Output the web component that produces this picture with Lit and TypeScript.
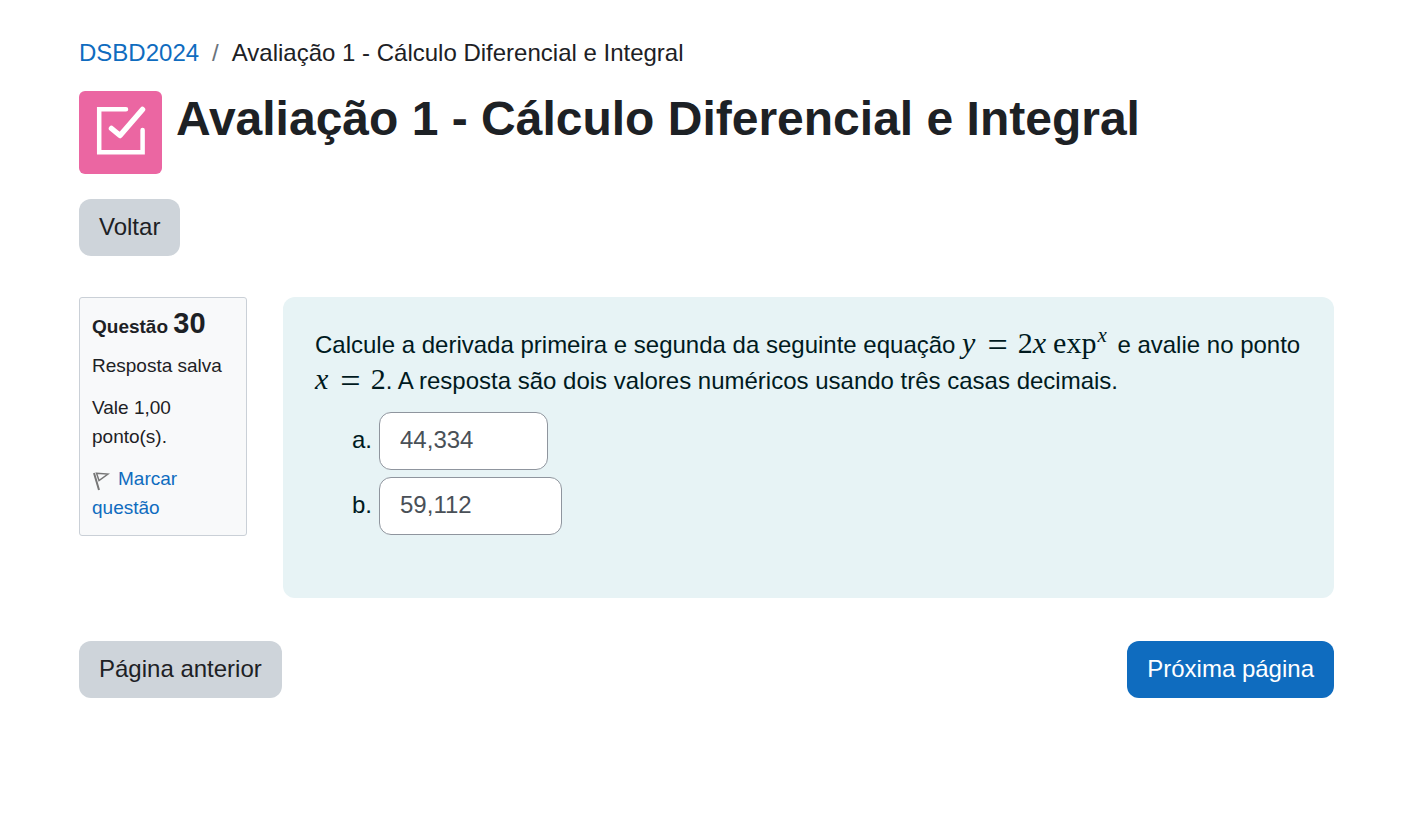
import { LitElement, html, css } from "lit";
import { customElement } from "lit/decorators.js";

@customElement("app-root")
export class AppRoot extends LitElement {
  static styles = css`
    :host {
      display: block;
      font: 24px/36px "Liberation Sans", Arial, sans-serif;
      color: #1d2125;
      background: #fff;
    }
    * { box-sizing: border-box; }
    main { padding: 35px 86px 36px 79px; }
    a { color: #0f6cbf; text-decoration: none; }
    .crumbs { display: flex; flex-wrap: wrap; gap: 13px; }
    .slash { color: #6a737b; }
    .heading { display: flex; align-items: flex-start; gap: 14px; margin-top: 20px; }
    .icon { flex: none; width: 83px; height: 83px; border-radius: 6px; background: #eb66a2; }
    .icon svg { display: block; width: 100%; height: 100%; }
    h1 { margin: 0; font-size: 48px; line-height: 56px; font-weight: 700; }
    button {
      font: inherit;
      padding: 10px 20px 11px;
      border: 0;
      border-radius: 12px;
      background: #ced4da;
      color: #1d2125;
      cursor: pointer;
    }
    .back { margin-top: 25px; display: flex; }
    .question { display: flex; align-items: flex-start; gap: 36px; margin-top: 41px; }
    .info {
      flex: none;
      width: 168px;
      padding: 9px 12px 13px;
      border: 1px solid #cad0d7;
      border-radius: 3px;
      background: #f8f9fa;
      font-size: 19px;
      line-height: 29px;
    }
    .info h2 { margin: 0; font-size: 19px; line-height: 32px; font-weight: 700; }
    .number { font-size: 29px; }
    .info p { margin: 0 0 13px; }
    .info h2 + p { margin-top: 8px; }
    .info p:last-child { margin-bottom: 0; }
    .flag { width: 18px; height: 20px; margin-right: 8px; vertical-align: -6px; }
    .content {
      flex: 1;
      min-width: 0;
      padding: 30px 32px 63px;
      border-radius: 12px;
      background: #e7f3f5;
      color: #001a1e;
    }
    .content p { margin: 0; }
    .math { font-family: "Liberation Serif", "Times New Roman", serif; font-size: 30px; line-height: 1px; white-space: nowrap; }
    .math i { padding-right: 4px; }
    .math .eq { font-size: 36px; line-height: 1px; padding: 0 10px 0 8px; vertical-align: -4px; }
    .math sup { font-size: 21px; line-height: 1px; vertical-align: 11px; }
    .math .fn { padding: 0 1px 0 3px; }
    ol { margin: 13px 0 0; padding: 0 0 0 37px; list-style: none; display: grid; gap: 7px; }
    li { display: flex; align-items: center; gap: 7px; }
    input {
      font: inherit;
      height: 58px;
      padding: 0 20px 2px;
      border: 1px solid #8f959e;
      border-radius: 12px;
      background: #fff;
      color: #495057;
    }
    li label { padding-bottom: 2px; }
    .short { width: 169px; }
    .long { width: 183px; }
    nav.pages { display: flex; justify-content: space-between; margin-top: 43px; }
    button.primary { background: #0f6cbf; color: #fff; }
  `;

  render() {
    return html`
      <main>
        <nav class="crumbs" aria-label="Navegação">
          <a href="#">DSBD2024</a><span class="slash">/</span>
          <span>Avaliação 1 - Cálculo Diferencial e Integral</span>
        </nav>
        <header class="heading">
          <div class="icon">
            <svg viewBox="0 0 83 83" fill="none" stroke="#fff" stroke-linecap="round" stroke-linejoin="round" aria-hidden="true">
              <path stroke-width="4.500" stroke-linejoin="miter" d="M47 18.200H20.200V61.300H63.600V39" />
              <path stroke-width="5.500" d="M32.500 37.500L41 44.500L63.500 18.500" />
            </svg>
          </div>
          <h1>Avaliação 1 - Cálculo Diferencial e Integral</h1>
        </header>
        <div class="back"><button type="button">Voltar</button></div>
        <section class="question">
          <aside class="info">
            <h2>Questão <span class="number">30</span></h2>
            <p>Resposta salva</p>
            <p>Vale 1,00 ponto(s).</p>
            <p>
              <a href="#"><svg class="flag" viewBox="0 0 18 20" fill="none" stroke="#777" aria-hidden="true">
                <path stroke-width="2" d="M2 2L7 19" />
                <path stroke-width="1.500" d="M4.500 2.200L16 3L7 9.500Z" />
              </svg>Marcar questão</a>
            </p>
          </aside>
          <div class="content">
            <p>
              Calcule a derivada primeira e segunda da seguinte equação
              <span class="math"><i>y</i><span class="eq">=</span>2<i>x</i><span class="fn">exp</span><sup><i>x</i></sup></span>
              e avalie no ponto
              <span class="math"><i>x</i><span class="eq">=</span>2</span>. A resposta são dois valores numéricos usando três casas decimais.
            </p>
            <ol>
              <li><label for="a">a.</label><input id="a" class="short" type="text" value="44,334" /></li>
              <li><label for="b">b.</label><input id="b" class="long" type="text" value="59,112" /></li>
            </ol>
          </div>
        </section>
        <nav class="pages" aria-label="Páginas">
          <button type="button">Página anterior</button>
          <button type="button" class="primary">Próxima página</button>
        </nav>
      </main>
    `;
  }
}
